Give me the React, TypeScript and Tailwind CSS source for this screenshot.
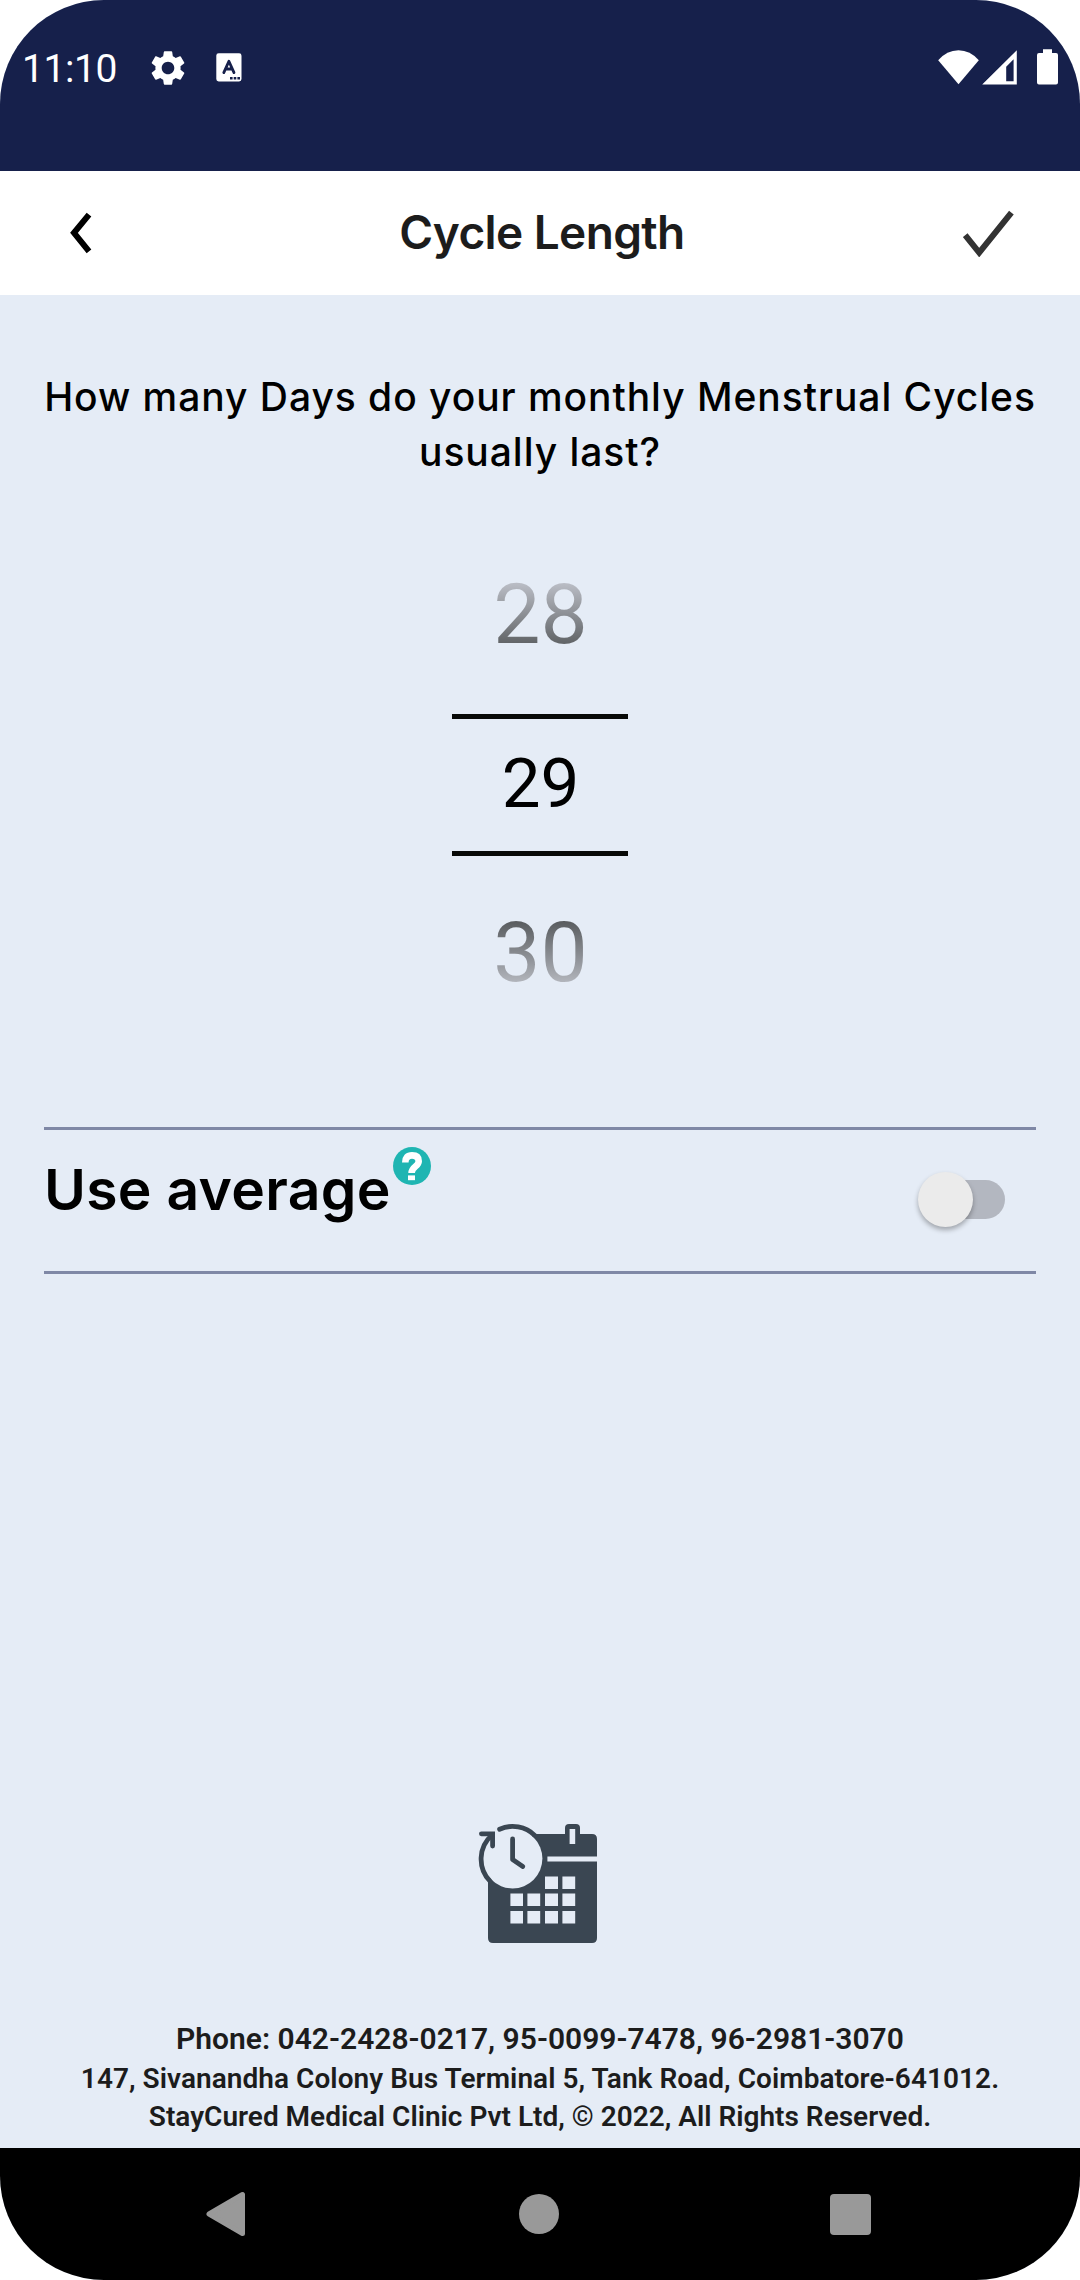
import { useState } from "react";
import { MdSettings } from "react-icons/md";

const DAYS = [28, 29, 30];

const StatusBar = () => {
  return (
    <div className="flex h-[171px] items-start justify-between bg-[#16204b] pt-[46px] pr-[22px] pl-[22px] text-white">
      <div className="flex h-[43px] items-center">
        <span className="w-[125px] pt-[3px] font-['Roboto',sans-serif] text-[39px] leading-[40px] tracking-[-0.4px]">
          11:10
        </span>
        <MdSettings className="h-[42px] w-[42px]" />
        <svg
          viewBox="0 0 26 29"
          className="ml-[27px] h-[29px] w-[26px]"
          fill="none"
        >
          <rect x="0.3" y="0.3" width="25.2" height="28.2" rx="2.4" fill="#fff" />
          <path
            d="M7.8 19.6 12.9 8.2 18 19.6M9.9 16h6"
            stroke="#16204b"
            strokeWidth="2.8"
            strokeLinecap="round"
            strokeLinejoin="round"
          />
          <path
            d="M14 24h2.6v2.4H14zM17.7 24h2.6v2.4h-2.6zM21.4 24H24v2.4h-2.6z"
            fill="#16204b"
          />
        </svg>
      </div>

      <svg viewBox="0 0 120 36" className="mt-[3px] h-[36px] w-[120px]">
        <path d="M20.5 35.3 0.2 11.2Q8.8 1.2 20.5 1.2T40.8 11.2Z" fill="#fff" />
        <path
          d="M78.8 1.3V35.5H44.2ZM75.6 10.3 68.2 17.7V32.2h7.4Z"
          fill="#fff"
          fillRule="evenodd"
        />
        <path
          d="M105 0.3h9v3.6h4q2 0 2 2V33.6q0 2-2 2H101q-2 0-2-2V5.9q0-2 2-2h4Z"
          fill="#fff"
        />
      </svg>
    </div>
  );
};

const Header = () => {
  return (
    <header className="flex h-[124px] items-center justify-between bg-white pr-[66px] pl-[70px]">
      <button type="button" className="w-[51px]" aria-label="Back">
        <svg viewBox="0 0 22 42" className="h-[42px] w-[22px]" fill="none">
          <path d="M19 2.6 4 20.8 19 39.4" stroke="#000" strokeWidth="6" />
        </svg>
      </button>
      <h1 className="pb-[3px] font-['Inter',sans-serif] text-[46px] leading-[60px] font-semibold tracking-[-0.6px] text-[#1c1c1c]">
        Cycle Length
      </h1>
      <button type="button" aria-label="Save">
        <svg viewBox="0 0 51 47" className="h-[47px] w-[51px]" fill="none">
          <path d="M2.2 25.2 16.2 42.6 48.4 2.6" stroke="#333" strokeWidth="6" />
        </svg>
      </button>
    </header>
  );
};

const DayPicker = () => {
  return (
    <div className="mt-[86px] flex flex-col items-center font-['Roboto',sans-serif]">
      <div className="bg-[linear-gradient(to_bottom,#b9bcc4_19%,#5f6265_80%)] bg-clip-text pl-px text-[84px] leading-[100px] text-transparent">
        {DAYS[0]}
      </div>
      <div className="mt-[49px] flex h-[142px] w-[176px] items-center justify-center border-y-[5px] border-[#080a08] pb-[2px] pl-px text-[69px] leading-[80px] text-black">
        {DAYS[1]}
      </div>
      <div className="mt-[47px] bg-[linear-gradient(to_bottom,#5a5d60_19%,#b3b6bd_80%)] bg-clip-text pl-px text-[84px] leading-[100px] text-transparent">
        {DAYS[2]}
      </div>
    </div>
  );
};

const UseAverage = () => {
  const [isOn, setIsOn] = useState(false);

  return (
    <div className="mx-[44px] mt-[124px] flex h-[147px] items-start border-y-[3px] border-[#7f88a6]">
      <span className="mt-[30px] w-[349px] font-['Inter',sans-serif] text-[57px] leading-[60px] font-semibold tracking-[0.3px] whitespace-nowrap text-black">
        Use average
      </span>
      <svg viewBox="0 0 38 38" className="mt-[17px] h-[38px] w-[38px]" fill="none">
        <circle cx="19" cy="19" r="19" fill="#1fb5b2" />
        <path
          d="M12.3 15.4Q12.3 8.4 19 8.4T25.7 14.2C25.7 19.6 18.6 19.6 18.6 26"
          stroke="#fff"
          strokeWidth="6.6"
        />
        <path d="M15 28.4h7v4.8h-7z" fill="#fff" />
      </svg>
      <button
        type="button"
        role="switch"
        aria-checked={isOn}
        onClick={() => setIsOn((prev) => !prev)}
        className="mt-[50px] mr-[31px] ml-auto flex h-[39px] w-[85px] items-center rounded-full bg-[linear-gradient(to_right,transparent_30%,#b3b7c0_30%)]"
      >
        <span
          className={
            isOn
              ? "ml-[30px] size-[55px] shrink-0 rounded-full bg-[#ebebeb] shadow-[0_3px_5px_rgba(0,0,0,0.3)]"
              : "ml-[-2px] size-[55px] shrink-0 rounded-full bg-[#ebebeb] shadow-[0_3px_5px_rgba(0,0,0,0.3)]"
          }
        />
      </button>
    </div>
  );
};

const CalendarIcon = () => {
  return (
    <svg
      viewBox="0 0 120 120"
      className="mx-auto mt-auto mb-[75px] h-[120px] w-[120px] -translate-x-[2px]"
      fill="none"
    >
      <path
        d="M56 10H114q5 0 5 5v99q0 5-5 5H15q-5 0-5-5V56L34 34Z"
        fill="#3a4652"
      />
      <circle cx="34.6" cy="34.6" r="29.8" fill="#e5ecf6" />
      <path
        d="M21.6 5.2A32 32 0 0 1 57 11.6M12 57.2A32 32 0 0 1 14 11"
        stroke="#3a4652"
        strokeWidth="4.8"
        strokeLinecap="round"
      />
      <path
        d="M3.4 9.8H14.6V22"
        stroke="#3a4652"
        strokeWidth="4.8"
        strokeLinecap="round"
      />
      <path
        d="M34.6 15V35.6L44.8 42.4"
        stroke="#3a4652"
        strokeWidth="4.8"
        strokeLinecap="round"
        strokeLinejoin="round"
      />
      <path d="M69.4 32.4H119v5H69.4z" fill="#e5ecf6" />
      <path d="M87 11V4q0-4 4-4h7q4 0 4 4v7Z" fill="#3a4652" />
      <path d="M91.6 5h5.6v15h-5.6z" fill="#e5ecf6" />
      <path
        d="M67 52.4h13v12.6H67zM84.4 52.4h12.8v12.6H84.4zM32.4 69.4h12.6V82H32.4zM49.4 69.4h12.8V82H49.4zM67 69.4h13V82H67zM84.4 69.4h12.8V82H84.4zM32.4 87h12.6v12.6H32.4zM49.4 87h12.8v12.6H49.4zM67 87h13v12.6H67zM84.4 87h12.8v12.6H84.4z"
        fill="#e5ecf6"
      />
    </svg>
  );
};

const Footer = () => {
  return (
    <footer className="pb-[12px] text-center font-['Roboto',sans-serif] font-semibold whitespace-nowrap text-[#1c1c1c]">
      <p className="text-[30px] leading-[40px]">
        Phone: 042-2428-0217, 95-0099-7478, 96-2981-3070
      </p>
      <p className="mt-px text-[28px] leading-[38px] tracking-[0.05px]">
        147, Sivanandha Colony Bus Terminal 5, Tank Road, Coimbatore-641012.
      </p>
      <p className="text-[28px] leading-[38px]">
        StayCured Medical Clinic Pvt Ltd, © 2022, All Rights Reserved.
      </p>
    </footer>
  );
};

const NavigationBar = () => {
  return (
    <nav className="flex h-[132px] items-start justify-between bg-black pt-[43px] pr-[209px] pl-[206px]">
      <svg viewBox="0 0 42 46" className="h-[46px] w-[42px]">
        <path
          d="M3 23 36.5 3.5V42.5Z"
          fill="#999"
          stroke="#999"
          strokeWidth="5"
          strokeLinejoin="round"
        />
      </svg>
      <div className="mt-[3px] size-[40px] rounded-full bg-[#999]" />
      <div className="mt-[3px] size-[41px] rounded-[4px] bg-[#999]" />
    </nav>
  );
};

export default function App() {
  return (
    <div className="h-[2280px] w-[1080px] bg-white">
      <div className="flex h-full flex-col overflow-hidden rounded-[104px] bg-[#e5ecf6]">
        <StatusBar />
        <Header />
        <main className="flex flex-1 flex-col">
          <p className="mt-[74px] text-center font-['Inter',sans-serif] text-[39px] leading-[55px] font-medium tracking-[0.95px] whitespace-nowrap text-black">
            How many Days do your monthly Menstrual Cycles
            <br />
            usually last?
          </p>
          <DayPicker />
          <UseAverage />
          <CalendarIcon />
          <Footer />
        </main>
        <NavigationBar />
      </div>
    </div>
  );
}
